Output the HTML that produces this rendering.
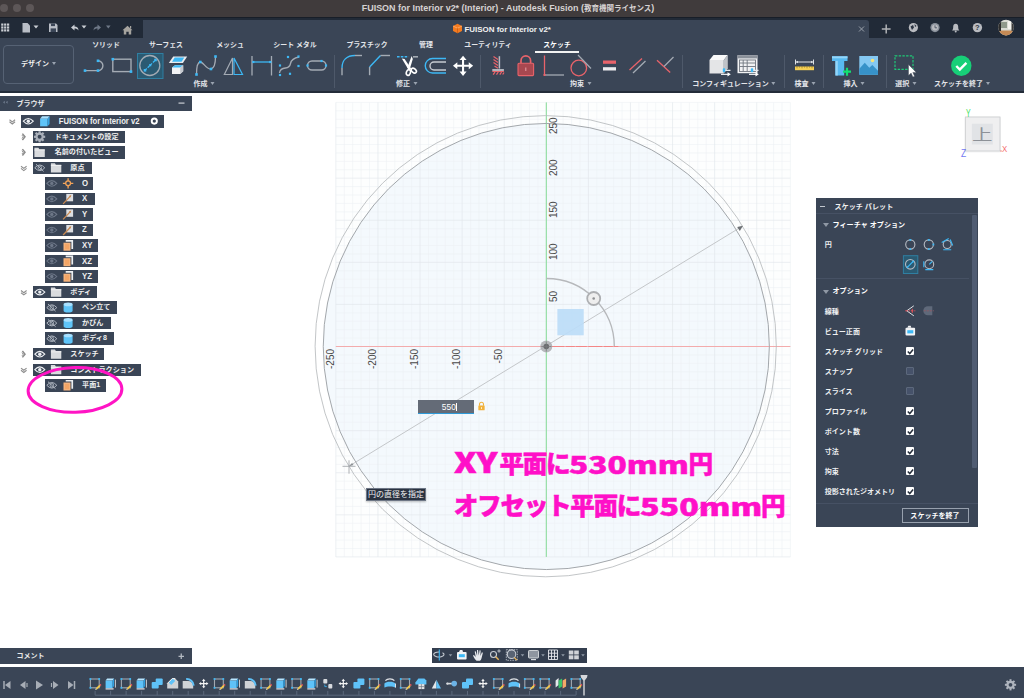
<!DOCTYPE html>
<html lang="ja"><head><meta charset="utf-8"><title>FUISON for Interior v2</title>
<style>
*{box-sizing:border-box;margin:0;padding:0}
html,body{width:1024px;height:698px;overflow:hidden;background:#fff}
body{font-family:"Liberation Sans","Noto Sans CJK JP",sans-serif;position:relative;color:#fff}
.a{position:absolute}
svg{position:absolute;overflow:visible}
#titlebar{left:0;top:0;width:1024px;height:17px;background:#403b3c}
#title{left:0;top:0;width:1016px;height:17px;text-align:center;font-size:8.95px;line-height:16.6px;color:#d6d2d2;font-weight:bold;white-space:nowrap}
.tl{position:absolute;top:4px;width:8px;height:8px;border-radius:50%;background:#5d5758}
#qat{left:0;top:17px;width:1024px;height:21px;background:#212a37;border-top:1.5px solid #181e28}
#tab{left:143px;top:20px;width:725.5px;height:18px;background:#3a4556}
#tabt{left:464.5px;top:20px;height:19px;font-size:7.95px;line-height:20px;font-weight:bold;color:#f2f2f2;white-space:nowrap}
#toolbar{left:0;top:38px;width:1024px;height:53px;background:#3a4556}
#tbline{left:0;top:91px;width:1024px;height:2px;background:#232c39}
.tabl{position:absolute;top:38.5px;height:12px;line-height:12px;font-size:6.9px;font-weight:bold;color:#e4e6ea;white-space:nowrap;transform:translateX(-50%)}
.grpl{position:absolute;top:78px;height:12px;line-height:12px;font-size:7px;font-weight:bold;color:#e4e6ea;white-space:nowrap;transform:translateX(-50%)}
.car{display:inline-block;width:0;height:0;border-left:2.5px solid transparent;border-right:2.5px solid transparent;border-top:3px solid #9aa3b0;margin-left:3px;vertical-align:1px}
.sep{position:absolute;top:55px;width:1px;height:32.5px;background:#4e596a}
#design{left:3px;top:45px;width:71px;height:39px;border:1px solid #566274;border-radius:4px;font-size:7px;font-weight:bold;line-height:35.6px;text-align:center;color:#f0f0f0}
.row{position:absolute;height:12.5px;background:#3a4556;font-size:7.1px;font-weight:bold;line-height:12.8px;color:#f0f0f0;white-space:nowrap}
.row span{position:absolute;top:0}
#bhead{left:0;top:95.7px;width:192px;height:15.3px;background:#3a4556;font-size:7px;font-weight:bold;line-height:15px;color:#e8e8e8}
#cbar{left:0;top:648.3px;width:192px;height:15.8px;background:#3a4556;font-size:7px;font-weight:bold;line-height:16px;color:#e8e8e8}
#tline{left:0;top:667px;width:1024px;height:31px;background:#3a4556}
#nav{left:432px;top:647.5px;width:154.6px;height:15.3px;background:#343e4f}
#pal{left:816px;top:198px;width:161.5px;height:328.5px;background:#3a4556}
.pl{position:absolute;left:8.7px;font-size:7.05px;font-weight:bold;color:#eef0f2;white-space:nowrap;height:12px;line-height:12px}
.ph{position:absolute;left:16.5px;font-size:7.1px;font-weight:bold;color:#fff;white-space:nowrap;height:12px;line-height:12px}
.tri{position:absolute;left:6.5px;width:0;height:0;border-left:3px solid transparent;border-right:3px solid transparent;border-top:4px solid #8f98a5}
.cb{position:absolute;left:90px;width:8.4px;height:8.4px;background:#fff;border-radius:1px}
.cbe{position:absolute;left:90px;width:8.4px;height:8.4px;background:#46526a;border:1px solid #5c687c;border-radius:1px}
#pink{left:455px;top:0;font-size:24.6px;line-height:34px;letter-spacing:-1.3px;-webkit-text-stroke:.5px #ff10c8;color:#ff10c8;font-family:"Noto Sans CJK JP","Liberation Sans",sans-serif;font-weight:900;white-space:nowrap}
.axl{position:absolute;font-family:"Liberation Sans",sans-serif;font-size:10px;color:#4a4a4a;white-space:nowrap;transform-origin:0 0;transform:rotate(-90deg);line-height:10px;height:10px}
#tip{left:365.7px;top:488.3px;width:60.5px;height:12.6px;background:#2a3240;border:1px solid #6d7685;color:#f4f4f4;font-size:8px;line-height:12px;text-align:center;white-space:nowrap;box-shadow:0 1px 2px rgba(0,0,0,.25)}
#inp{left:418.4px;top:399.7px;width:55.8px;height:14.5px;background:#646b77;border-bottom:1.5px solid #2e9ad8;color:#fff;font-size:8.4px;line-height:14px;text-align:right;padding-right:18.4px}
.lx{display:inline-block;vertical-align:baseline}.lx{letter-spacing:0}.lx b{display:inline-block;font-weight:900;transform-origin:0 76%}
</style></head><body>
<div id="titlebar" class="a"><span class="tl" style="left:0px"></span><span class="tl" style="left:13px"></span><span class="tl" style="left:26px"></span></div>
<div id="title" class="a">FUISON for Interior v2* (Interior) - Autodesk Fusion (<span style="font-size:7.500px">教育機関ライセンス</span>)</div>
<div id="qat" class="a"></div><div id="tab" class="a" style="border-radius:0 3px 0 0"></div>
<div id="tabt" class="a">FUISON for Interior v2*</div>
<div id="toolbar" class="a"></div><div id="tbline" class="a"></div>
<div id="design" class="a">デザイン<i class="car"></i></div>
<div class="tabl" style="left:106px;">ソリッド</div>
<div class="tabl" style="left:166px;">サーフェス</div>
<div class="tabl" style="left:230px;">メッシュ</div>
<div class="tabl" style="left:295px;">シート メタル</div>
<div class="tabl" style="left:367px;">プラスチック</div>
<div class="tabl" style="left:426px;">管理</div>
<div class="tabl" style="left:488px;">ユーティリティ</div>
<div class="tabl" style="left:557px;color:#fff">スケッチ</div>
<div class="a" style="left:535px;top:51px;width:44px;height:2px;background:#f2f2f2"></div>
<div class="grpl" style="left:204px">作成<i class="car"></i></div>
<div class="grpl" style="left:406.5px">修正<i class="car"></i></div>
<div class="grpl" style="left:580.6px">拘束<i class="car"></i></div>
<div class="grpl" style="left:734px">コンフィギュレーション<i class="car"></i></div>
<div class="grpl" style="left:805px">検査<i class="car"></i></div>
<div class="grpl" style="left:854px">挿入<i class="car"></i></div>
<div class="grpl" style="left:905.7px">選択<i class="car"></i></div>
<div class="grpl" style="left:962px">スケッチを終了<i class="car"></i></div>
<div class="sep" style="left:333.5px"></div>
<div class="sep" style="left:479.5px"></div>
<div class="sep" style="left:681.5px"></div>
<div class="sep" style="left:784px"></div>
<div class="sep" style="left:823px"></div>
<div class="sep" style="left:885.5px"></div>
<svg width="1024" height="93" style="left:0;top:0" viewBox="0 0 1024 93"><rect x="1.2" y="23.5" width="2.2" height="2.2" fill="#c9cdd3"/><rect x="1.2" y="26.4" width="2.2" height="2.2" fill="#c9cdd3"/><rect x="1.2" y="29.3" width="2.2" height="2.2" fill="#c9cdd3"/><rect x="4.1" y="23.5" width="2.2" height="2.2" fill="#c9cdd3"/><rect x="4.1" y="26.4" width="2.2" height="2.2" fill="#c9cdd3"/><rect x="4.1" y="29.3" width="2.2" height="2.2" fill="#c9cdd3"/><rect x="7.0" y="23.5" width="2.2" height="2.2" fill="#c9cdd3"/><rect x="7.0" y="26.4" width="2.2" height="2.2" fill="#c9cdd3"/><rect x="7.0" y="29.3" width="2.2" height="2.2" fill="#c9cdd3"/><path d="M22.5 23 h5 l2.5 2.5 v7 h-7.5z" fill="#b9bec6"/><path d="M33.5 25.5h5l-2.5 3z" fill="#c9cdd3"/><path d="M49 23.5h7l1.5 1.5v7h-8.5z" fill="#b9bec6"/><rect x="51" y="23.5" width="4" height="2.6" fill="#3a4556"/><rect x="50.6" y="28.4" width="5.4" height="3.6" fill="#3a4556"/><path d="M71 27.5l3.5-3v2c2.5 0 4 1.2 4 4-1-1.6-2.2-2-4-2v2z" fill="#c9cdd3"/><path d="M81.500 25.5h5l-2.5 3z" fill="#c9cdd3"/><path d="M101 27.5l-3.500-3v2c-2.500 0-4 1.200-4 4 1-1.600 2.200-2 4-2v2z" fill="#6e7887"/><path d="M106 25.5h4.600l-2.300 3z" fill="#6e7887"/><path d="M122.500 30.200l5-4.500 5 4.500h-1.300v4.300h-2.500v-2.800h-2.400v2.800h-2.500v-4.300z" fill="#a6a49f"/><rect x="130" y="26" width="1.200" height="2.500" fill="#a6a49f"/><path d="M453 26l4.500-2.300 4.500 2.300v5l-4.500 2.300-4.500-2.300z" fill="#f47b20"/><path d="M453 26l4.500 2.200 4.500-2.200" stroke="#ffb070" stroke-width=".8" fill="none"/><path d="M457.500 28.200v5" stroke="#c95d10" stroke-width=".8"/><path d="M859 26.500l5 5m0-5l-5 5" stroke="#9aa1ab" stroke-width="1"/><path d="M881.800 29h8.800m-4.400-4.400v8.800" stroke="#b0b2b5" stroke-width="1.500"/><circle cx="913.400" cy="27.600" r="4.600" fill="#b9bbc0"/><path d="M910.500 26.500l2.500-1.500 1 2.500-2 2.500zM914.500 24l2 2-1.500 1z" fill="#2a3341"/><circle cx="935" cy="27.600" r="4.600" fill="#8a919b"/><circle cx="935" cy="27.600" r="3" fill="#b9bbc0"/><path d="M935 25.300v2.500h2" stroke="#4a5362" stroke-width=".9" fill="none"/><path d="M952 30.500c1-.8 1.200-2 1.200-3.800 0-1.700 1-2.900 2.500-2.900s2.500 1.200 2.500 2.900c0 1.800.2 3 1.200 3.800z" fill="#b9bbc0"/><circle cx="955.700" cy="31.600" r="1" fill="#b9bbc0"/><circle cx="977.400" cy="27.600" r="4.700" fill="#b9bbc0"/><text x="977.400" y="30.400" font-size="7.500" font-weight="bold" text-anchor="middle" fill="#2a3341" font-family="Liberation Sans,sans-serif">?</text><clipPath id="av"><circle cx="1006" cy="27.600" r="7.800"/></clipPath><g clip-path="url(#av)"><rect x="998" y="19" width="16" height="17" fill="#d9dcd4"/><rect x="998" y="30.500" width="16" height="6" fill="#c58a55"/><rect x="1001" y="22" width="6" height="6" fill="#8f9a8c"/><rect x="1008" y="21" width="5" height="8" fill="#f3f3ee"/><rect x="998" y="19" width="3" height="12" fill="#2d2d2d"/><rect x="1011.500" y="19" width="3" height="12" fill="#3a3a3a"/></g><path d="M85 70.600H98A4.900 4.900 0 0 0 98 60.800" stroke="#a4abb4" stroke-width="1.400" fill="none"/><rect x="83.7" y="69.3" width="2.6" height="2.6" fill="#3db8f5"/><rect x="96.7" y="69.3" width="2.6" height="2.6" fill="#3db8f5"/><rect x="96.7" y="59.5" width="2.6" height="2.6" fill="#3db8f5"/><rect x="112.800" y="59.200" width="18.200" height="12.400" stroke="#a4abb4" stroke-width="1.400" fill="none"/><rect x="111.5" y="57.9" width="2.6" height="2.6" fill="#3db8f5"/><rect x="129.7" y="70.3" width="2.6" height="2.6" fill="#3db8f5"/><rect x="137.500" y="53.500" width="25.500" height="25" fill="#2b5a72" stroke="#2f7fa2" stroke-width="1"/><circle cx="149.800" cy="65.500" r="10" stroke="#a4abb4" stroke-width="1.300" fill="none"/><path d="M145 70.300L155.500 60" stroke="#3db8f5" stroke-width="1.200" stroke-dasharray="2.500 1.200"/><rect x="143.7" y="69.0" width="2.6" height="2.6" fill="#3db8f5"/><rect x="154.2" y="58.7" width="2.6" height="2.6" fill="#3db8f5"/><rect x="149.1" y="64.1" width="2.2" height="2.2" fill="#3db8f5"/><path d="M168.800 63l4.400-6.600h14l-4.300 6.600z" fill="#e9ebee"/><path d="M172 61.800l2.700-4.200h9.600l-2.700 4.200z" fill="#3db8f5"/><path d="M172 67.500l3-2.200h8.200v6l-3 2.700h-8.200z" fill="#f2f3f5"/><path d="M172 67.500l3-2.200h8.200l-3 2.200z" fill="#3db8f5"/><path d="M180.200 67.500l3-2.200v6l-3 2.700z" fill="#c4c8ce"/><path d="M196.500 74.500C196.500 66 198 62 200.500 62S207 70 211 69S215.500 62 215.500 56.500" stroke="#a4abb4" stroke-width="1.300" fill="none"/><rect x="195.2" y="73.2" width="2.6" height="2.6" fill="#3db8f5"/><rect x="199.0" y="60.7" width="2.6" height="2.6" fill="#3db8f5"/><rect x="209.7" y="67.7" width="2.6" height="2.6" fill="#3db8f5"/><rect x="214.2" y="55.2" width="2.6" height="2.6" fill="#3db8f5"/><path d="M224.300 74.500L232.500 58V74.500z" stroke="#a4abb4" stroke-width="1.200" fill="none"/><path d="M234 58l8.500 16.500H234z" stroke="#3db8f5" stroke-width="1.200" fill="none"/><path d="M252 56v19.500M271.500 56v19.500" stroke="#a4abb4" stroke-width="1.300"/><path d="M253 62h18" stroke="#3db8f5" stroke-width="1.300"/><rect x="252.2" y="60.9" width="2.2" height="2.2" fill="#3db8f5"/><rect x="269.2" y="60.9" width="2.2" height="2.2" fill="#3db8f5"/><path d="M279.500 73c.5-3.500 3-4.800 6-5s4.500-2 5-4.500 3-5.500 8.500-6.500" stroke="#a4abb4" stroke-width="1.300" fill="none"/><rect x="278.9" y="64.4" width="2.2" height="2.2" fill="#3db8f5"/><rect x="278.9" y="73.9" width="2.2" height="2.2" fill="#3db8f5"/><rect x="286.9" y="55.9" width="2.2" height="2.2" fill="#3db8f5"/><rect x="288.9" y="72.7" width="2.2" height="2.2" fill="#3db8f5"/><rect x="297.4" y="55.4" width="2.2" height="2.2" fill="#3db8f5"/><rect x="297.4" y="64.9" width="2.2" height="2.2" fill="#3db8f5"/><rect x="307.500" y="61" width="18.500" height="9" rx="4.500" stroke="#a4abb4" stroke-width="1.400" fill="none"/><rect x="306.4" y="64.4" width="2.2" height="2.2" fill="#3db8f5"/><rect x="324.9" y="64.4" width="2.2" height="2.2" fill="#3db8f5"/><rect x="320.4" y="59.9" width="2.2" height="2.2" fill="#3db8f5"/><path d="M342 75.200V68" stroke="#a4abb4" stroke-width="1.400"/><path d="M342 68C342 60 347 55.500 355 55.500" stroke="#3db8f5" stroke-width="1.400" fill="none"/><path d="M355 55.500h7" stroke="#a4abb4" stroke-width="1.400"/><path d="M369.600 75.200V67" stroke="#a4abb4" stroke-width="1.400"/><path d="M369.600 67L380.500 55.500" stroke="#3db8f5" stroke-width="1.400"/><path d="M380.500 55.500H390" stroke="#a4abb4" stroke-width="1.400"/><path d="M397 56.800h11.500" stroke="#3db8f5" stroke-width="1.600" stroke-dasharray="2.600 1.200"/><path d="M413 56.800h5" stroke="#a4abb4" stroke-width="1.600"/><path d="M401.800 58.600l2.800.3 6.600 9.800-2.200 1.800z" fill="#fff"/><path d="M411.600 56l1.200 3-3 10-2.600-1z" fill="#fff"/><ellipse cx="408.400" cy="72.500" rx="2" ry="2.900" transform="rotate(20 408.400 72.500)" stroke="#fff" stroke-width="1.600" fill="none"/><ellipse cx="413.800" cy="70.600" rx="2" ry="2.900" transform="rotate(-50 413.800 70.600)" stroke="#fff" stroke-width="1.600" fill="none"/><path d="M446 58.500H432.500a7.250 7.250 0 0 0 0 14.500H446" stroke="#3db8f5" stroke-width="1.400" fill="none"/><path d="M446 62H434a4 4 0 0 0 0 8H446" stroke="#c5cad1" stroke-width="1.400" fill="none"/><g transform="translate(463.050 65.800) scale(1.040)"><path d="M0 -9.700l3.400 4.200h-2.400v4.500h4.500v-2.400l4.200 3.400-4.200 3.400v-2.400h-4.500v4.500h2.400l-3.400 4.200-3.400-4.200h2.400v-4.500h-4.500v2.400l-4.200-3.400 4.200-3.400v2.400h4.500v-4.500h-2.400z" fill="#fff"/></g><path d="M499.400 56.200V68.500" stroke="#b8bdc5" stroke-width="1.500"/><path d="M493.500 56.500l4.500 3M493.500 59.500l4.500 3M493.500 62.500l4.500 3M494.500 66l3.500 2.300" stroke="#e8636a" stroke-width="1.300"/><path d="M492.300 70h11.600" stroke="#d8dbe0" stroke-width="1.500"/><path d="M492.300 71.500h11.600" stroke="#e8636a" stroke-width="1"/><path d="M495 72l-1.800 2.600M498.300 72l-1.800 2.600M501.600 72l-1.800 2.600M504 72.500l-1.300 2" stroke="#e8636a" stroke-width="1.300"/><path d="M521 63.500v-2.800a4.800 4.800 0 0 1 9.600 0v2.800" stroke="#e8636a" stroke-width="1.700" fill="none"/><rect x="518" y="63.300" width="15.600" height="12.300" rx="1" fill="#a84850" stroke="#e8636a" stroke-width="1.100"/><path d="M525.800 67.500v3.500" stroke="#e9a0a4" stroke-width="1"/><path d="M544.500 55.500V75" stroke="#e8636a" stroke-width="1.300"/><path d="M545 75h19" stroke="#a4abb4" stroke-width="1.300"/><rect x="543.500" y="74" width="2" height="2" fill="#e8636a"/><circle cx="578.800" cy="68" r="7.800" stroke="#e8636a" stroke-width="1.300" fill="none"/><path d="M578 55l13 13.500" stroke="#a4abb4" stroke-width="1.200"/><rect x="603" y="60.500" width="13" height="3.300" fill="#e8636a"/><rect x="603" y="67.200" width="13" height="3.300" fill="#ebecee"/><path d="M629.500 70L642 58.500" stroke="#e8636a" stroke-width="1.300"/><path d="M633 73L645.500 61" stroke="#a4abb4" stroke-width="1.300"/><path d="M657 60.300L670.200 72.600" stroke="#e8636a" stroke-width="1.300"/><path d="M664 66.500L673.500 57" stroke="#a4abb4" stroke-width="1.300"/><path d="M709.500 60l4-5h14.300l-4 5z" fill="#fafafa"/><path d="M709.500 60h14.300v13.500h-14.300z" fill="#e4e5e7"/><path d="M723.800 60l4-5v13.500l-4 5z" fill="#bfc2c7"/><path d="M721 70.300h9.500M721 74.300h7" stroke="#e8eaee" stroke-width="1.300"/><rect x="722.800" y="68.300" width="2.400" height="4" rx=".8" fill="#3db8f5"/><path d="M727.500 72.200l3.300 2.100-3.300 2.100z" fill="#fff"/><rect x="737.500" y="55.200" width="20" height="18" fill="#f1f2f3"/><rect x="737.500" y="55.200" width="20" height="3.200" fill="#8a9099"/><path d="M739.500 63h16M739.500 66.500h16M743.200 60v11.500M747.200 60v11.500" stroke="#70767f" stroke-width=".9"/><rect x="739.500" y="60" width="16" height="11.500" fill="none" stroke="#70767f" stroke-width=".9"/><path d="M749 70.300h9.500M749 74.300h7" stroke="#e8eaee" stroke-width="1.300"/><rect x="750.800" y="68.300" width="2.400" height="4" rx=".8" fill="#3db8f5"/><path d="M755.500 72.200l3.300 2.100-3.300 2.100z" fill="#fff"/><path d="M795.500 59.500v5M813.500 59.500v5M796 62h17" stroke="#dfe2e6" stroke-width="1"/><path d="M796 62l2-1.200v2.400zM813 62l-2-1.200v2.400z" fill="#dfe2e6"/><rect x="795" y="66.500" width="19" height="3.700" fill="#f5cf55"/><path d="M797 66.300v2M799.500 66.300v1.300M802 66.300v2M804.500 66.300v1.300M807 66.300v2M809.500 66.300v1.300M812 66.300v2" stroke="#8a6d14" stroke-width=".6"/><path d="M832 56.300h15.500v4.600h-3.300v14.600h-8.800v-14.600h-3.400z" fill="#58b9f0"/><path d="M832 56.300h15.500v2h-15.500z" fill="#93d5f9"/><path d="M835.400 60.900h2.400v14.600h-2.400z" fill="#93d5f9"/><path d="M843 71.700h8M847 67.700v8" stroke="#12e070" stroke-width="2.200"/><rect x="859.300" y="56" width="18.700" height="18.700" fill="#84c8f2"/><path d="M859.300 74.700v-6l5.500-6 4.500 5 3-2.700 5.700 5.700v4z" fill="#3792c9"/><circle cx="872.500" cy="60.500" r="1.800" fill="#f6e27a"/><rect x="895" y="55.800" width="18" height="13.500" fill="none" stroke="#1fc977" stroke-width="1.200" stroke-dasharray="2.400 1.300"/><path d="M908.500 64.500v11l2.600-2.400 1.800 4 1.700-.8-1.800-3.900h3.500z" fill="#fff" stroke="#39424f" stroke-width=".4"/><circle cx="961.300" cy="65.800" r="10.200" fill="#17cf78"/><path d="M956.300 66l3.500 3.600 6.600-6.800" stroke="#fff" stroke-width="2.400" fill="none"/></svg>
<svg width="1024" height="500" style="left:0;top:94px" viewBox="0 94 1024 500"><rect x="335.87" y="102.41" width="454.52" height="454.52" fill="#fdfefe"/><circle cx="546.3" cy="346.5" r="223.05" fill="#f4f9fd"/><path d="M344.29 102.41V556.92M352.71 102.41V556.92M361.13 102.41V556.92M369.54 102.41V556.92M386.38 102.41V556.92M394.79 102.41V556.92M403.21 102.41V556.92M411.63 102.41V556.92M428.46 102.41V556.92M436.88 102.41V556.92M445.30 102.41V556.92M453.71 102.41V556.92M470.55 102.41V556.92M478.96 102.41V556.92M487.38 102.41V556.92M495.80 102.41V556.92M512.63 102.41V556.92M521.05 102.41V556.92M529.47 102.41V556.92M537.88 102.41V556.92M554.72 102.41V556.92M563.13 102.41V556.92M571.55 102.41V556.92M579.97 102.41V556.92M596.80 102.41V556.92M605.22 102.41V556.92M613.64 102.41V556.92M622.05 102.41V556.92M638.89 102.41V556.92M647.30 102.41V556.92M655.72 102.41V556.92M664.14 102.41V556.92M680.97 102.41V556.92M689.39 102.41V556.92M697.81 102.41V556.92M706.22 102.41V556.92M723.06 102.41V556.92M731.47 102.41V556.92M739.89 102.41V556.92M748.31 102.41V556.92M765.14 102.41V556.92M773.56 102.41V556.92M781.98 102.41V556.92M790.39 102.41V556.92M335.87 548.51H790.39M335.87 540.09H790.39M335.87 531.67H790.39M335.87 523.26H790.39M335.87 506.42H790.39M335.87 498.01H790.39M335.87 489.59H790.39M335.87 481.17H790.39M335.87 464.34H790.39M335.87 455.92H790.39M335.87 447.50H790.39M335.87 439.09H790.39M335.87 422.25H790.39M335.87 413.84H790.39M335.87 405.42H790.39M335.87 397.00H790.39M335.87 380.17H790.39M335.87 371.75H790.39M335.87 363.33H790.39M335.87 354.92H790.39M335.87 338.08H790.39M335.87 329.67H790.39M335.87 321.25H790.39M335.87 312.83H790.39M335.87 296.00H790.39M335.87 287.58H790.39M335.87 279.16H790.39M335.87 270.75H790.39M335.87 253.91H790.39M335.87 245.50H790.39M335.87 237.08H790.39M335.87 228.66H790.39M335.87 211.83H790.39M335.87 203.41H790.39M335.87 194.99H790.39M335.87 186.58H790.39M335.87 169.74H790.39M335.87 161.33H790.39M335.87 152.91H790.39M335.87 144.49H790.39M335.87 127.66H790.39M335.87 119.24H790.39M335.87 110.82H790.39M335.87 102.41H790.39" stroke="#edf0f4" stroke-width=".55" fill="none"/><path d="M335.87 102.41V556.92M377.96 102.41V556.92M420.04 102.41V556.92M462.13 102.41V556.92M504.21 102.41V556.92M546.30 102.41V556.92M588.38 102.41V556.92M630.47 102.41V556.92M672.55 102.41V556.92M714.64 102.41V556.92M756.72 102.41V556.92M335.87 556.92H790.39M335.87 514.84H790.39M335.87 472.75H790.39M335.87 430.67H790.39M335.87 388.58H790.39M335.87 346.50H790.39M335.87 304.42H790.39M335.87 262.33H790.39M335.87 220.25H790.39M335.87 178.16H790.39M335.87 136.07H790.39" stroke="#e2e6eb" stroke-width=".65" fill="none"/><path d="M335.87 346.5H790.39" stroke="#f4a4a4" stroke-width=".9"/><path d="M546.3 102.41V556.92" stroke="#86dc98" stroke-width="1"/><circle cx="546.3" cy="346.5" r="223.05" fill="none" stroke="#9ea2a6" stroke-width=".95"/><circle cx="545.700" cy="346.200" r="230.600" fill="none" stroke="#b7babd" stroke-width=".85"/><path d="M349 466.200L741 227" stroke="#b8babd" stroke-width=".8"/><path d="M743 225.700l-5.800 1.300 2.600 4z" fill="#6c7074"/><path d="M342.500 466.300h13M349 460.300v13.400" stroke="#a4a7ab" stroke-width=".9"/><path d="M349 466.200l4.500-1.200-1.500-2z" fill="#8c9094"/><path d="M546.3 278.500A68 68 0 0 1 614.3 346.5" fill="none" stroke="#b6b8bb" stroke-width="1.300"/><path d="M550.3 346.5H618.3" stroke="#f48686" stroke-width="1.200" stroke-dasharray="14 1.500 9 1 11 1.500"/><circle cx="593.700" cy="298.500" r="6.500" fill="#eeeeee" stroke="#adafb2" stroke-width="1.800"/><circle cx="593.700" cy="298.500" r="1.300" fill="#8d8f92"/><rect x="557.400" y="309" width="26.300" height="26.300" fill="#bcdcf7" opacity=".92"/><circle cx="546.3" cy="346.5" r="6" fill="#a6a8ab" opacity=".8"/><circle cx="546.3" cy="346.5" r="2.800" fill="#6a6c6f"/><path d="M541.3 346.5h10M546.3 341.5v10" stroke="#77797c" stroke-width=".7"/></svg>
<div class="axl" style="left:548.9px;top:301.8px">50</div>
<div class="axl" style="left:494.2px;top:373.0px;width:24px;text-align:right">-50</div>
<div class="axl" style="left:548.9px;top:259.7px">100</div>
<div class="axl" style="left:452.1px;top:373.0px;width:24px;text-align:right">-100</div>
<div class="axl" style="left:548.9px;top:217.6px">150</div>
<div class="axl" style="left:410.0px;top:373.0px;width:24px;text-align:right">-150</div>
<div class="axl" style="left:548.9px;top:175.6px">200</div>
<div class="axl" style="left:368.0px;top:373.0px;width:24px;text-align:right">-200</div>
<div class="axl" style="left:548.9px;top:133.5px">250</div>
<div class="axl" style="left:325.9px;top:373.0px;width:24px;text-align:right">-250</div>
<div id="inp" class="a">550<span class="a" style="right:17.300px;top:3.300px;width:.7px;height:8.500px;background:#fff"></span></div>
<svg width="9" height="10.800" style="left:476.600px;top:401.200px" viewBox="0 0 10 12"><path d="M2.800 5.200V3.600a2.200 2.200 0 0 1 4.400 0V5.200" stroke="#f1b13a" stroke-width="1.200" fill="none"/><rect x="1.500" y="5" width="7" height="5.400" rx=".6" fill="#f1b13a"/><rect x="4.500" y="6.800" width="1" height="2" fill="#fff6d8"/></svg>
<div id="tip" class="a">円の直径を指定</div>
<div id="pink" class="a"><div class="a" id="pk1" style="left:0;top:444.900px"><span class="lx" style="width:44.4px"><b style="transform:translateY(0px) scale(1.4,1.11);margin-left:-1px">XY</b></span>平面に<span class="lx" style="width:119.2px"><b style="transform:translateY(1.4px) scale(1.285,0.96);margin-left:0px">530mm</b></span>円</div><div class="a" id="pk2" style="left:-1.200px;top:486.500px">オフセット平面に<span class="lx" style="width:120.8px"><b style="transform:translateY(1.4px) scale(1.31,0.96);margin-left:0px">550mm</b></span>円</div></div>
<svg width="70" height="60" style="left:954px;top:100px" viewBox="954 100 70 60"><rect x="964.400" y="116.500" width="36.600" height="36" rx="1.500" fill="#f4f4f5"/><rect x="965.400" y="117" width="34.600" height="34" fill="#efeff0" stroke="#cfd0d2" stroke-width=".9"/><rect x="971.900" y="123.700" width="20.900" height="20.800" fill="#e1e3e6"/><path d="M1000 151h2" stroke="#f27a7a" stroke-width=".8"/><text x="968.200" y="116.800" font-size="11.500" fill="#45e060" text-anchor="middle" font-family="Liberation Sans,sans-serif" transform="translate(968.200 0) scale(.6 1) translate(-968.200 0)">Y</text><text x="1004.600" y="151.700" font-size="9.800" fill="#f46e6e" text-anchor="middle" font-family="Liberation Sans,sans-serif" transform="translate(1004.600 0) scale(.8 1) translate(-1004.600 0)">X</text><text x="963.500" y="156.600" font-size="10" fill="#6f78f2" text-anchor="middle" font-family="Liberation Sans,sans-serif" transform="translate(963.500 0) scale(.85 1) translate(-963.500 0)">Z</text><text x="982.300" y="141.300" font-size="20.500" font-weight="400" fill="#8d9197" text-anchor="middle" font-family="Noto Sans CJK JP,sans-serif" transform="translate(0 140.300) scale(1 .72) translate(0 -141.300)">上</text></svg>
<div id="bhead" class="a"><span class="a" style="left:16.500px;top:0">ブラウザ</span></div>
<div class="row" style="left:21.3px;top:115.0px;width:142.3px"><span style="left:37.5px;font-size:7.7px;transform:scaleY(1.16);top:1.4px">FUISON for Interior v2</span></div>
<div class="row" style="left:32.8px;top:130.5px;width:91.9px"><span style="left:21.9px">ドキュメントの設定</span></div>
<div class="row" style="left:32.8px;top:146.1px;width:91.9px"><span style="left:21.9px">名前の付いたビュー</span></div>
<div class="row" style="left:32.8px;top:161.6px;width:58.8px"><span style="left:37.5px">原点</span></div>
<div class="row" style="left:44.8px;top:177.1px;width:48.2px"><span style="left:37.3px;font-size:7.8px;top:.8px;transform:scaleY(1.12)">O</span></div>
<div class="row" style="left:44.8px;top:192.6px;width:50.7px"><span style="left:37.3px;font-size:7.8px;top:.8px;transform:scaleY(1.12)">X</span></div>
<div class="row" style="left:44.8px;top:208.2px;width:48.2px"><span style="left:37.3px;font-size:7.8px;top:.8px;transform:scaleY(1.12)">Y</span></div>
<div class="row" style="left:44.8px;top:223.7px;width:48.2px"><span style="left:37.3px;font-size:7.8px;top:.8px;transform:scaleY(1.12)">Z</span></div>
<div class="row" style="left:44.8px;top:239.2px;width:53.2px"><span style="left:37.3px;font-size:7.8px;top:.8px;transform:scaleY(1.12)">XY</span></div>
<div class="row" style="left:44.8px;top:254.8px;width:53.2px"><span style="left:37.3px;font-size:7.8px;top:.8px;transform:scaleY(1.12)">XZ</span></div>
<div class="row" style="left:44.8px;top:270.3px;width:53.2px"><span style="left:37.3px;font-size:7.8px;top:.8px;transform:scaleY(1.12)">YZ</span></div>
<div class="row" style="left:32.8px;top:285.8px;width:64.0px"><span style="left:37.5px">ボディ</span></div>
<div class="row" style="left:44.8px;top:301.4px;width:71.8px"><span style="left:37.3px">ペン立て</span></div>
<div class="row" style="left:44.8px;top:316.9px;width:66.2px"><span style="left:37.3px">かびん</span></div>
<div class="row" style="left:44.8px;top:332.4px;width:68.8px"><span style="left:37.3px">ボディ8</span></div>
<div class="row" style="left:32.8px;top:347.9px;width:71.7px"><span style="left:37.5px">スケッチ</span></div>
<div class="row" style="left:32.8px;top:363.5px;width:108.2px"><span style="left:37.5px">コンストラクション</span></div>
<div class="row" style="left:44.8px;top:379.0px;width:61.2px"><span style="left:37.3px">平面1</span></div>
<svg width="260" height="330" style="left:0;top:94px" viewBox="0 94 260 330"><path d="M3 102.300l1.800-1.500v3zM5.800 102.300l1.800-1.500v3z" fill="#6f7b8e"/><rect x="178.500" y="102.500" width="6" height="1.200" fill="#c9cdd3"/><path d="M23.3 121.2Q28.3 115.7 33.3 121.2Q28.3 126.8 23.3 121.2z" fill="none" stroke="#eef0f3" stroke-width="1.100"/><circle cx="28.3" cy="121.2" r="1.700" fill="#eef0f3"/><path d="M40.1 118.7l2-2.400h7.500l-2 2.400z" fill="#a8e0ff"/><path d="M40.1 118.7h7.500v7.600h-7.500z" fill="#5fc4f8"/><path d="M47.6 118.7l2-2.400v7.600l-2 2.400z" fill="#36a4e4"/><path d="M9.5 119.7l2.800 2.200 2.800-2.200M9.5 121.8l2.800 2.200 2.800-2.200" fill="none" stroke="#8e8e8e" stroke-width="1.100"/><circle cx="39.599999999999994" cy="136.78" r="3.100" fill="none" stroke="#aab0ba" stroke-width="2.200"/><rect x="38.5" y="131.2" width="2.200" height="2.600" fill="#aab0ba" transform="rotate(0 39.599999999999994 136.78)"/><rect x="38.5" y="131.2" width="2.200" height="2.600" fill="#aab0ba" transform="rotate(45 39.599999999999994 136.78)"/><rect x="38.5" y="131.2" width="2.200" height="2.600" fill="#aab0ba" transform="rotate(90 39.599999999999994 136.78)"/><rect x="38.5" y="131.2" width="2.200" height="2.600" fill="#aab0ba" transform="rotate(135 39.599999999999994 136.78)"/><rect x="38.5" y="131.2" width="2.200" height="2.600" fill="#aab0ba" transform="rotate(180 39.599999999999994 136.78)"/><rect x="38.5" y="131.2" width="2.200" height="2.600" fill="#aab0ba" transform="rotate(225 39.599999999999994 136.78)"/><rect x="38.5" y="131.2" width="2.200" height="2.600" fill="#aab0ba" transform="rotate(270 39.599999999999994 136.78)"/><rect x="38.5" y="131.2" width="2.200" height="2.600" fill="#aab0ba" transform="rotate(315 39.599999999999994 136.78)"/><path d="M22.4 133.6l2.600 3.200-2.600 3.200" fill="none" stroke="#8c8c8c" stroke-width="1.500"/><path d="M22.0 135.2l1.300 1.600-1.300 1.600" fill="none" stroke="#8c8c8c" stroke-width="1"/><path d="M34.4 147.7h4l1 1.500h5.400v7.700h-10.400z" fill="#d9dbde"/><path d="M34.4 150.0h10.400" stroke="#f4f4f4" stroke-width=".8"/><path d="M22.4 149.1l2.600 3.200-2.600 3.200" fill="none" stroke="#8c8c8c" stroke-width="1.500"/><path d="M22.0 150.7l1.300 1.600-1.300 1.600" fill="none" stroke="#8c8c8c" stroke-width="1"/><path d="M34.8 167.8Q39.8 162.2 44.8 167.8Q39.8 173.4 34.8 167.8z" fill="none" stroke="#aeb5c0" stroke-width="1"/><circle cx="39.8" cy="167.8" r="1.800" fill="none" stroke="#aeb5c0" stroke-width=".9"/><path d="M36.0 164.2L43.6 171.4" stroke="#aeb5c0" stroke-width="1"/><path d="M50.9 163.2h4l1 1.500h5.400v7.700h-10.400z" fill="#d9dbde"/><path d="M50.9 165.5h10.400" stroke="#f4f4f4" stroke-width=".8"/><path d="M21.0 166.2l2.800 2.200 2.800-2.200M21.0 168.4l2.800 2.200 2.800-2.200" fill="none" stroke="#8e8e8e" stroke-width="1.100"/><path d="M46.8 183.4Q51.8 177.8 56.8 183.4Q51.8 189.0 46.8 183.4z" fill="none" stroke="#6d7788" stroke-width="1.100"/><circle cx="51.8" cy="183.4" r="1.700" fill="#6d7788"/><circle cx="68.1" cy="183.37" r="2.400" fill="none" stroke="#f2a35a" stroke-width="1.300"/><path d="M68.1 178.17000000000002v3M68.1 185.57v3M62.89999999999999 183.37h3M70.3 183.37h3" stroke="#f2a35a" stroke-width="1.300"/><path d="M46.8 198.9Q51.8 193.3 56.8 198.9Q51.8 204.5 46.8 198.9z" fill="none" stroke="#6d7788" stroke-width="1.100"/><circle cx="51.8" cy="198.9" r="1.700" fill="#6d7788"/><rect x="66.3" y="193.9" width="6.800" height="7.400" fill="#dcdee2"/><path d="M63.1 203.9L70.6 195.9" stroke="#c98a52" stroke-width="1.300"/><path d="M71.3 195.1l-2.400 .8 1.600 1.600z" fill="#c98a52"/><path d="M46.8 214.4Q51.8 208.8 56.8 214.4Q51.8 220.0 46.8 214.4z" fill="none" stroke="#6d7788" stroke-width="1.100"/><circle cx="51.8" cy="214.4" r="1.700" fill="#6d7788"/><rect x="66.3" y="209.4" width="6.800" height="7.400" fill="#dcdee2"/><path d="M63.1 219.4L70.6 211.4" stroke="#c98a52" stroke-width="1.300"/><path d="M71.3 210.6l-2.400 .8 1.600 1.600z" fill="#c98a52"/><path d="M46.8 230.0Q51.8 224.4 56.8 230.0Q51.8 235.6 46.8 230.0z" fill="none" stroke="#6d7788" stroke-width="1.100"/><circle cx="51.8" cy="230.0" r="1.700" fill="#6d7788"/><rect x="66.3" y="225.0" width="6.800" height="7.400" fill="#dcdee2"/><path d="M63.1 235.0L70.6 227.0" stroke="#c98a52" stroke-width="1.300"/><path d="M71.3 226.2l-2.400 .8 1.600 1.600z" fill="#c98a52"/><path d="M46.8 245.5Q51.8 239.9 56.8 245.5Q51.8 251.1 46.8 245.5z" fill="none" stroke="#6d7788" stroke-width="1.100"/><circle cx="51.8" cy="245.5" r="1.700" fill="#6d7788"/><path d="M65.7 240.1h7.400v8.800h-1.700v-7.100h-5.700z" fill="#eceef0"/><rect x="63.5" y="242.7" width="7" height="8" fill="#f5b27a"/><rect x="65.0" y="244.2" width="4" height="5" fill="#f3a565"/><path d="M46.8 261.0Q51.8 255.4 56.8 261.0Q51.8 266.6 46.8 261.0z" fill="none" stroke="#6d7788" stroke-width="1.100"/><circle cx="51.8" cy="261.0" r="1.700" fill="#6d7788"/><path d="M65.7 255.6h7.400v8.800h-1.700v-7.100h-5.700z" fill="#eceef0"/><rect x="63.5" y="258.2" width="7" height="8" fill="#f5b27a"/><rect x="65.0" y="259.7" width="4" height="5" fill="#f3a565"/><path d="M46.8 276.5Q51.8 270.9 56.8 276.5Q51.8 282.1 46.8 276.5z" fill="none" stroke="#6d7788" stroke-width="1.100"/><circle cx="51.8" cy="276.5" r="1.700" fill="#6d7788"/><path d="M65.7 271.1h7.400v8.800h-1.700v-7.100h-5.700z" fill="#eceef0"/><rect x="63.5" y="273.7" width="7" height="8" fill="#f5b27a"/><rect x="65.0" y="275.2" width="4" height="5" fill="#f3a565"/><path d="M34.8 292.1Q39.8 286.5 44.8 292.1Q39.8 297.7 34.8 292.1z" fill="none" stroke="#eef0f3" stroke-width="1.100"/><circle cx="39.8" cy="292.1" r="1.700" fill="#eef0f3"/><path d="M50.9 287.5h4l1 1.500h5.400v7.700h-10.400z" fill="#d9dbde"/><path d="M50.9 289.8h10.400" stroke="#f4f4f4" stroke-width=".8"/><path d="M21.0 290.5l2.800 2.200 2.800-2.200M21.0 292.7l2.800 2.200 2.800-2.200" fill="none" stroke="#8e8e8e" stroke-width="1.100"/><path d="M46.8 307.6Q51.8 302.0 56.8 307.6Q51.8 313.2 46.8 307.6z" fill="none" stroke="#aeb5c0" stroke-width="1"/><circle cx="51.8" cy="307.6" r="1.800" fill="none" stroke="#aeb5c0" stroke-width=".9"/><path d="M48.0 304.0L55.6 311.2" stroke="#aeb5c0" stroke-width="1"/><path d="M63.6 304.4v6.400a4.500 1.800 0 0 0 9 0v-6.400z" fill="#5fc4f8"/><ellipse cx="68.1" cy="304.4" rx="4.500" ry="1.800" fill="#a8e0ff"/><path d="M46.8 323.1Q51.8 317.5 56.8 323.1Q51.8 328.7 46.8 323.1z" fill="none" stroke="#aeb5c0" stroke-width="1"/><circle cx="51.8" cy="323.1" r="1.800" fill="none" stroke="#aeb5c0" stroke-width=".9"/><path d="M48.0 319.5L55.6 326.7" stroke="#aeb5c0" stroke-width="1"/><path d="M63.6 319.9v6.400a4.500 1.800 0 0 0 9 0v-6.400z" fill="#5fc4f8"/><ellipse cx="68.1" cy="319.9" rx="4.500" ry="1.800" fill="#a8e0ff"/><path d="M46.8 338.7Q51.8 333.1 56.8 338.7Q51.8 344.3 46.8 338.7z" fill="none" stroke="#aeb5c0" stroke-width="1"/><circle cx="51.8" cy="338.7" r="1.800" fill="none" stroke="#aeb5c0" stroke-width=".9"/><path d="M48.0 335.1L55.6 342.3" stroke="#aeb5c0" stroke-width="1"/><path d="M63.6 335.5v6.400a4.500 1.800 0 0 0 9 0v-6.400z" fill="#5fc4f8"/><ellipse cx="68.1" cy="335.5" rx="4.500" ry="1.800" fill="#a8e0ff"/><path d="M34.8 354.2Q39.8 348.6 44.8 354.2Q39.8 359.8 34.8 354.2z" fill="none" stroke="#eef0f3" stroke-width="1.100"/><circle cx="39.8" cy="354.2" r="1.700" fill="#eef0f3"/><path d="M50.9 349.6h4l1 1.500h5.400v7.700h-10.400z" fill="#d9dbde"/><path d="M50.9 351.9h10.400" stroke="#f4f4f4" stroke-width=".8"/><path d="M22.4 351.0l2.600 3.200-2.600 3.200" fill="none" stroke="#8c8c8c" stroke-width="1.500"/><path d="M22.0 352.6l1.300 1.600-1.300 1.600" fill="none" stroke="#8c8c8c" stroke-width="1"/><path d="M34.8 369.7Q39.8 364.1 44.8 369.7Q39.8 375.3 34.8 369.7z" fill="none" stroke="#eef0f3" stroke-width="1.100"/><circle cx="39.8" cy="369.7" r="1.700" fill="#eef0f3"/><path d="M50.9 365.1h4l1 1.500h5.400v7.700h-10.400z" fill="#d9dbde"/><path d="M50.9 367.4h10.400" stroke="#f4f4f4" stroke-width=".8"/><path d="M21.0 368.1l2.800 2.200 2.800-2.200M21.0 370.3l2.800 2.200 2.800-2.200" fill="none" stroke="#8e8e8e" stroke-width="1.100"/><path d="M46.8 385.3Q51.8 379.7 56.8 385.3Q51.8 390.9 46.8 385.3z" fill="none" stroke="#aeb5c0" stroke-width="1"/><circle cx="51.8" cy="385.3" r="1.800" fill="none" stroke="#aeb5c0" stroke-width=".9"/><path d="M48.0 381.7L55.6 388.9" stroke="#aeb5c0" stroke-width="1"/><path d="M65.7 379.9h7.400v8.800h-1.700v-7.100h-5.700z" fill="#eceef0"/><rect x="63.5" y="382.5" width="7" height="8" fill="#f5b27a"/><rect x="65.0" y="384.0" width="4" height="5" fill="#f3a565"/><circle cx="154.300" cy="121.1" r="2.600" fill="none" stroke="#fff" stroke-width="1.900"/><ellipse cx="75" cy="389.900" rx="46.900" ry="22.300" fill="none" stroke="#ff14c4" stroke-width="3" transform="rotate(-1.500 75 389.900)"/></svg>
<div id="pal" class="a"><div class="a" style="left:0;top:14.500px;width:161.500px;height:1px;background:#465164"></div>
<div class="a" style="left:3.500px;top:7.800px;width:5px;height:1.200px;background:#c2c7ce"></div>
<div class="ph" style="left:18.500px;top:2.500px;color:#f0f0f0;font-weight:bold">スケッチ パレット</div>
<div class="a" style="left:156.400px;top:16.500px;width:4.300px;height:253px;background:#505c72;border-radius:1px"></div>
<div class="tri" style="top:25px"></div><div class="ph" style="top:20.600px">フィーチャ オプション</div>
<div class="pl" style="top:41px">円</div>
<div class="a" style="left:0;top:80.300px;width:152.500px;height:1px;background:#465164"></div>
<div class="tri" style="top:91.500px"></div><div class="ph" style="top:87px">オプション</div>
<div class="pl" style="top:107.9px">線種</div>
<div class="pl" style="top:127.9px">ビュー正面</div>
<div class="pl" style="top:147.9px">スケッチ グリッド</div>
<div class="cb" style="top:149.1px"></div>
<div class="pl" style="top:167.9px">スナップ</div>
<div class="cbe" style="top:169.1px"></div>
<div class="pl" style="top:187.9px">スライス</div>
<div class="cbe" style="top:189.1px"></div>
<div class="pl" style="top:207.9px">プロファイル</div>
<div class="cb" style="top:209.1px"></div>
<div class="pl" style="top:227.9px">ポイント数</div>
<div class="cb" style="top:229.1px"></div>
<div class="pl" style="top:247.9px">寸法</div>
<div class="cb" style="top:249.1px"></div>
<div class="pl" style="top:267.9px">拘束</div>
<div class="cb" style="top:269.1px"></div>
<div class="pl" style="top:287.9px">投影されたジオメトリ</div>
<div class="cb" style="top:289.1px"></div>
<div class="a" style="left:0;top:305px;width:161.500px;height:1px;background:#465164"></div>
<div class="a" style="left:85.500px;top:309.500px;width:67px;height:15px;border:1px solid #97a0ad;font-size:7.050px;font-weight:bold;line-height:13px;text-align:center;color:#fff;white-space:nowrap">スケッチを終了</div>
<svg width="161" height="328" style="left:0;top:0" viewBox="0 0 161 328"><path d="M91.8 153.4l2 2.100 3.300-4" stroke="#28303c" stroke-width="1.500" fill="none"/><path d="M91.8 213.4l2 2.100 3.300-4" stroke="#28303c" stroke-width="1.500" fill="none"/><path d="M91.8 233.4l2 2.100 3.300-4" stroke="#28303c" stroke-width="1.500" fill="none"/><path d="M91.8 253.4l2 2.100 3.300-4" stroke="#28303c" stroke-width="1.500" fill="none"/><path d="M91.8 273.4l2 2.100 3.300-4" stroke="#28303c" stroke-width="1.500" fill="none"/><path d="M91.8 293.4l2 2.100 3.300-4" stroke="#28303c" stroke-width="1.500" fill="none"/><circle cx="94.3" cy="46.5" r="4.6" fill="none" stroke="#b4bac2" stroke-width="1.100"/><rect x="93.4" y="41.0" width="1.8" height="1.8" fill="#3db8f5"/><rect x="93.4" y="50.2" width="1.8" height="1.8" fill="#3db8f5"/><circle cx="112.8" cy="46.5" r="4.6" fill="none" stroke="#b4bac2" stroke-width="1.100"/><rect x="111.9" y="41.0" width="1.8" height="1.8" fill="#3db8f5"/><rect x="116.5" y="45.6" width="1.8" height="1.8" fill="#3db8f5"/><rect x="111.9" y="50.2" width="1.8" height="1.8" fill="#3db8f5"/><circle cx="131.2" cy="46.5" r="4" fill="none" stroke="#b4bac2" stroke-width="1.100"/><path d="M125.7 44.5L132.7 40.5M134.2 41.5L136.7 47.5M127.2 51.7h8" stroke="#3db8f5" stroke-width="1.100"/><rect x="87.400" y="57.700" width="14.400" height="17.800" fill="#2b5a72" stroke="#2f7fa2" stroke-width="1"/><circle cx="94.3" cy="66.3" r="4.8" fill="none" stroke="#b4bac2" stroke-width="1.100"/><path d="M91.5 69.1L97.1 63.5" stroke="#3db8f5" stroke-width="1.100"/><rect x="90.7" y="68.3" width="1.6" height="1.6" fill="#3db8f5"/><rect x="96.3" y="62.7" width="1.6" height="1.6" fill="#3db8f5"/><circle cx="113.3" cy="66.3" r="4.4" fill="none" stroke="#b4bac2" stroke-width="1.100"/><path d="M107.8 63.3v6M109.3 71.6h8M113.3 66.3l3-3" stroke="#3db8f5" stroke-width="1.100"/><path d="M97.8 107.8L90.8 112.8L97.8 117.8" fill="none" stroke="#e0e3e7" stroke-width="1"/><path d="M89.3 112.8h10" stroke="#e8545c" stroke-width="1" stroke-dasharray="2.500 1 1 1"/><path d="M96.3 110.8v4" stroke="#e8545c" stroke-width="1"/><path d="M111.8 108.3h4.500v9h-4.500a4.500 4.500 0 0 1 0-9z" fill="#5f697a"/><path d="M107.8 112.8h10" stroke="#8a5a66" stroke-width="1" stroke-dasharray="2 1"/><rect x="89.5" y="129.8" width="9.600" height="7.800" rx="1" fill="#f2f3f5"/><path d="M91.3 129.8l1-2h2.400l.6 2" fill="#f2f3f5"/><rect x="91.3" y="132.2" width="6" height="3.200" fill="#3db8f5"/></svg></div>
<div id="cbar" class="a"><span class="a" style="left:16.500px;top:0">コメント</span></div>
<div id="nav" class="a"></div><div id="tline" class="a"></div><svg width="1024" height="54" style="left:0;top:644px" viewBox="0 644 1024 54"><path d="M178.500 656.300h5.500M181.250 653.500v5.600" stroke="#b4bac2" stroke-width="1.300"/><path d="M442.500 652.7a5.200 2.500 0 1 1 -3-.7" fill="none" stroke="#c9ced5" stroke-width="1.100"/><path d="M439.300 649.5v11" stroke="#3db8f5" stroke-width="1.100"/><path d="M448.7 654.2h3.600l-1.800 2.400z" fill="#8f98a5"/><rect x="457" y="652" width="9.600" height="7.400" rx="1" fill="#f2f3f5"/><path d="M459 652l1-2h2.400l.6 2" fill="#f2f3f5"/><rect x="458.800" y="654.2" width="6" height="3" fill="#3db8f5"/><path d="M476.500 660.8c-1.200-1.200-2.800-3.600-3.500-5.400l.9-.5 1.800 2.200-1-5.600 1-.3 1.400 4.600-.1-5.800 1.100-.1.600 5.700.9-5.300 1.100.2-.4 5.600 1.600-3.800 1 .4-1.300 5.200c-.3 1.300-.8 2.200-1.600 2.900z" fill="#e6e8ec"/><circle cx="493.500" cy="654.5" r="3" fill="none" stroke="#c9ced5" stroke-width="1.100"/><path d="M495.700 656.7l3 3" stroke="#e9b45a" stroke-width="1.400"/><path d="M497.300 651h3.400M499 649.3v3.400" stroke="#c9ced5" stroke-width=".9"/><rect x="506.300" y="649.7" width="11" height="10.600" fill="none" stroke="#c9ced5" stroke-width=".8" stroke-dasharray="1.500 1"/><circle cx="511.500" cy="654.2" r="4.300" fill="#596373" stroke="#c9ced5" stroke-width="1.100"/><path d="M514.300 657.5l2.600 2.600" stroke="#e9b45a" stroke-width="1.300"/><path d="M520.7 654.2h3.600l-1.800 2.400z" fill="#8f98a5"/><rect x="528.500" y="650.5" width="10" height="7.500" rx=".8" fill="#8f96a0" stroke="#d9dce0" stroke-width=".9"/><path d="M531 659.6h5" stroke="#d9dce0" stroke-width="1.200"/><path d="M541.2 654.2h3.600l-1.800 2.400z" fill="#8f98a5"/><path d="M548.500 650h9v9.500h-9zM551.500 650v9.500M554.500 650v9.500M548.500 653.2h9M548.500 656.4h9" fill="none" stroke="#e6e8ec" stroke-width=".9"/><path d="M561.2 654.2h3.600l-1.800 2.400z" fill="#8f98a5"/><rect x="568.800" y="650.5" width="4.600" height="4" fill="#d0d3d8"/><rect x="574.200" y="650.5" width="4.600" height="4" fill="#d0d3d8"/><rect x="568.800" y="655.3" width="4.600" height="4" fill="#d0d3d8"/><rect x="574.200" y="655.3" width="4.600" height="4" fill="#d0d3d8"/><path d="M581.2 654.2h3.600l-1.800 2.400z" fill="#8f98a5"/><path d="M4 681v8" stroke="#a7adb6" stroke-width="1.500"/><path d="M10.500 681v8l-5.500-4z" fill="#a7adb6"/><path d="M25.500 681v8l-5.500-4z" fill="#a7adb6"/><path d="M27 683v4" stroke="#a7adb6" stroke-width="1.200"/><path d="M36 680.5v9l7-4.500z" fill="#a7adb6"/><path d="M53 681v8l5.500-4z" fill="#a7adb6"/><path d="M51.500 683v4" stroke="#a7adb6" stroke-width="1.200"/><path d="M68 681v8l5.500-4z" fill="#a7adb6"/><path d="M74.500 681v8" stroke="#a7adb6" stroke-width="1.500"/><rect x="90.4" y="679.0" width="8.8" height="8.8" fill="none" stroke="#a2a8b1" stroke-width="1.100"/><rect x="89.5" y="678.1" width="1.800" height="1.800" fill="#3db8f5"/><rect x="98.3" y="678.1" width="1.800" height="1.800" fill="#3db8f5"/><rect x="89.5" y="686.9" width="1.800" height="1.800" fill="#3db8f5"/><path d="M95.8 688.3l3.600-3.600 1.200 1.200-3.600 3.600z" fill="#f5c948"/><path d="M99.4 684.7l.9-.9 1.200 1.200-.9.9z" fill="#e8545c"/><path d="M95.8 688.3l1.200 1.200-1.800 .6z" fill="#f2e6c8"/><path d="M105.6 680.6l1.500-2h7l-1.500 2z" fill="#b8e6ff"/><rect x="105.6" y="680.6" width="7" height="7.500" fill="#5fc2f8"/><path d="M112.6 680.6l1.500-2v7.500l-1.500 2z" fill="#2f9fe0"/><path d="M115.4 679.6v8" stroke="#c9ced5" stroke-width="1"/><path d="M105.6 688.9h8" stroke="#e6e8ec" stroke-width="1.200"/><rect x="121.4" y="679.0" width="8.8" height="8.8" fill="none" stroke="#a2a8b1" stroke-width="1.100"/><rect x="120.5" y="678.1" width="1.800" height="1.800" fill="#3db8f5"/><rect x="129.3" y="678.1" width="1.800" height="1.800" fill="#3db8f5"/><rect x="120.5" y="686.9" width="1.800" height="1.800" fill="#3db8f5"/><path d="M126.8 688.3l3.600-3.600 1.200 1.200-3.600 3.600z" fill="#f5c948"/><path d="M130.4 684.7l.9-.9 1.200 1.200-.9.9z" fill="#e8545c"/><path d="M126.8 688.3l1.200 1.200-1.800 .6z" fill="#f2e6c8"/><path d="M136.6 680.6l1.500-2h7l-1.500 2z" fill="#b8e6ff"/><rect x="136.6" y="680.6" width="7" height="7.500" fill="#5fc2f8"/><path d="M143.6 680.6l1.500-2v7.500l-1.500 2z" fill="#2f9fe0"/><path d="M146.4 679.6v8" stroke="#c9ced5" stroke-width="1"/><path d="M136.6 688.9h8" stroke="#e6e8ec" stroke-width="1.200"/><rect x="155.7" y="678.6" width="7" height="6.500" rx="1" fill="#5fc2f8"/><rect x="151.7" y="682.1" width="7" height="6.500" rx="1" fill="#5fc2f8"/><path d="M167.2 688.6v-5l5-5h3l3 3v7z" fill="#cfd2d6"/><path d="M168.7 682.6l4-4 2.500 2.500-4 4z" fill="#5fc2f8"/><path d="M167.2 683.6l5-5h3" stroke="#f4f4f4" stroke-width="1" fill="none"/><path d="M182.7 688.6v-7.500h5.500a5 5 0 0 1 5 5v2.500z" fill="#cfd2d6"/><path d="M186.2 679.1a7 7 0 0 1 7.500 6.500" stroke="#5fc2f8" stroke-width="2" fill="none"/><g transform="translate(203.7 683.6) scale(.86)"><path d="M0 -5.500l2 2.500h-1.300v2.300h2.300v-1.300l2.500 2-2.500 2v-1.300h-2.300v2.300h1.300l-2 2.500-2-2.500h1.300v-2.300h-2.300v1.300l-2.500-2 2.500-2v1.300h2.300v-2.300h-1.300z" fill="#f4f4f4"/></g><rect x="214.5" y="679.0" width="8.8" height="8.8" fill="none" stroke="#a2a8b1" stroke-width="1.100"/><rect x="213.6" y="678.1" width="1.800" height="1.800" fill="#3db8f5"/><rect x="222.4" y="678.1" width="1.800" height="1.800" fill="#3db8f5"/><rect x="213.6" y="686.9" width="1.800" height="1.800" fill="#3db8f5"/><path d="M219.9 688.3l3.600-3.600 1.200 1.200-3.600 3.600z" fill="#f5c948"/><path d="M223.5 684.7l.9-.9 1.200 1.200-.9.9z" fill="#e8545c"/><path d="M219.9 688.3l1.200 1.200-1.800 .6z" fill="#f2e6c8"/><path d="M229.7 680.6l1.500-2h7l-1.500 2z" fill="#b8e6ff"/><rect x="229.7" y="680.6" width="7" height="7.500" fill="#5fc2f8"/><path d="M236.7 680.6l1.500-2v7.500l-1.500 2z" fill="#2f9fe0"/><path d="M239.5 679.6v8" stroke="#c9ced5" stroke-width="1"/><path d="M229.7 688.9h8" stroke="#e6e8ec" stroke-width="1.200"/><path d="M244.8 688.6v-7.500h5.500a5 5 0 0 1 5 5v2.500z" fill="#cfd2d6"/><path d="M248.2 679.1a7 7 0 0 1 7.500 6.500" stroke="#5fc2f8" stroke-width="2" fill="none"/><rect x="261.1" y="679.0" width="8.8" height="8.8" fill="none" stroke="#a2a8b1" stroke-width="1.100"/><rect x="260.2" y="678.1" width="1.800" height="1.800" fill="#3db8f5"/><rect x="269.0" y="678.1" width="1.800" height="1.800" fill="#3db8f5"/><rect x="260.2" y="686.9" width="1.800" height="1.800" fill="#3db8f5"/><path d="M266.5 688.3l3.600-3.600 1.200 1.200-3.600 3.600z" fill="#f5c948"/><path d="M270.1 684.7l.9-.9 1.200 1.200-.9.9z" fill="#e8545c"/><path d="M266.5 688.3l1.200 1.200-1.800 .6z" fill="#f2e6c8"/><path d="M276.3 680.6l1.500-2h7l-1.500 2z" fill="#b8e6ff"/><rect x="276.3" y="680.6" width="7" height="7.500" fill="#5fc2f8"/><path d="M283.3 680.6l1.500-2v7.500l-1.500 2z" fill="#2f9fe0"/><path d="M286.1 679.6v8" stroke="#c9ced5" stroke-width="1"/><path d="M276.3 688.9h8" stroke="#e6e8ec" stroke-width="1.200"/><rect x="292.1" y="679.0" width="8.8" height="8.8" fill="none" stroke="#a2a8b1" stroke-width="1.100"/><rect x="291.2" y="678.1" width="1.800" height="1.800" fill="#3db8f5"/><rect x="300.0" y="678.1" width="1.800" height="1.800" fill="#3db8f5"/><rect x="291.2" y="686.9" width="1.800" height="1.800" fill="#3db8f5"/><path d="M297.5 688.3l3.600-3.600 1.200 1.200-3.600 3.600z" fill="#f5c948"/><path d="M301.1 684.7l.9-.9 1.200 1.200-.9.9z" fill="#e8545c"/><path d="M297.5 688.3l1.200 1.200-1.800 .6z" fill="#f2e6c8"/><path d="M307.3 680.6l1.500-2h7l-1.500 2z" fill="#b8e6ff"/><rect x="307.3" y="680.6" width="7" height="7.500" fill="#5fc2f8"/><path d="M314.3 680.6l1.500-2v7.500l-1.500 2z" fill="#2f9fe0"/><path d="M317.1 679.6v8" stroke="#c9ced5" stroke-width="1"/><path d="M307.3 688.9h8" stroke="#e6e8ec" stroke-width="1.200"/><rect x="323.3" y="679.1" width="4" height="4.500" rx="1" fill="#d7dade"/><rect x="328.3" y="684.1" width="4" height="4.500" rx="1" fill="#d7dade"/><path d="M324.8 684.6v2h2" stroke="#3db8f5" stroke-width=".8" fill="none"/><g transform="translate(343.3 683.6) scale(.86)"><path d="M0 -5.500l2 2.500h-1.300v2.300h2.300v-1.300l2.500 2-2.500 2v-1.300h-2.300v2.300h1.300l-2 2.500-2-2.500h1.300v-2.300h-2.300v1.300l-2.500-2 2.500-2v1.300h2.300v-2.300h-1.300z" fill="#f4f4f4"/></g><rect x="357.4" y="678.6" width="7" height="6.500" rx="1" fill="#5fc2f8"/><rect x="353.4" y="682.1" width="7" height="6.500" rx="1" fill="#5fc2f8"/><rect x="369.7" y="679.0" width="8.8" height="8.8" fill="none" stroke="#a2a8b1" stroke-width="1.100"/><rect x="368.8" y="678.1" width="1.800" height="1.800" fill="#3db8f5"/><rect x="377.6" y="678.1" width="1.800" height="1.800" fill="#3db8f5"/><rect x="368.8" y="686.9" width="1.800" height="1.800" fill="#3db8f5"/><path d="M375.1 688.3l3.600-3.600 1.200 1.200-3.600 3.600z" fill="#f5c948"/><path d="M378.7 684.7l.9-.9 1.200 1.200-.9.9z" fill="#e8545c"/><path d="M375.1 688.3l1.200 1.200-1.800 .6z" fill="#f2e6c8"/><path d="M384.4 687.6v-4c2-2.500 9-2.500 11 0v4c-2-1.500-9-1.500-11 0z" fill="#5fc2f8"/><path d="M385.4 680.6c2-2.300 7-2.300 9 0" stroke="#dfe2e6" stroke-width="1.200" fill="none"/><path d="M395.5 683.6v4" stroke="#dfe2e6" stroke-width="1"/><rect x="400.7" y="679.0" width="8.8" height="8.8" fill="none" stroke="#a2a8b1" stroke-width="1.100"/><rect x="399.8" y="678.1" width="1.800" height="1.800" fill="#3db8f5"/><rect x="408.6" y="678.1" width="1.800" height="1.800" fill="#3db8f5"/><rect x="399.8" y="686.9" width="1.800" height="1.800" fill="#3db8f5"/><path d="M406.1 688.3l3.600-3.600 1.200 1.200-3.600 3.600z" fill="#f5c948"/><path d="M409.7 684.7l.9-.9 1.200 1.200-.9.9z" fill="#e8545c"/><path d="M406.1 688.3l1.200 1.200-1.800 .6z" fill="#f2e6c8"/><path d="M415.4 682.6l3-4h6l2 2v4h-11z" fill="#5fc2f8"/><rect x="418.4" y="684.1" width="6" height="5" fill="#e1e3e6"/><path d="M421.4 684.1v5M418.4 686.6h6" stroke="#6d7684" stroke-width=".7"/><path d="M431.8 688.4l4.600-8.600v8.600z" fill="#e4e6e9"/><path d="M436.4 679.8l4.600 8.600h-4.600z" fill="#5fc2f8"/><path d="M446.9 683.6h5" stroke="#d5d8dc" stroke-width="1.600"/><circle cx="454.2" cy="683.6" r="2.800" fill="#6cb3e6"/><circle cx="447.4" cy="683.6" r="1.200" fill="#d5d8dc"/><rect x="466.0" y="678.6" width="7" height="6.500" rx="1" fill="#5fc2f8"/><rect x="462.0" y="682.1" width="7" height="6.500" rx="1" fill="#5fc2f8"/><g transform="translate(483.0 683.6) scale(.86)"><path d="M0 -5.500l2 2.500h-1.300v2.300h2.300v-1.300l2.500 2-2.500 2v-1.300h-2.300v2.300h1.300l-2 2.500-2-2.500h1.300v-2.300h-2.300v1.300l-2.500-2 2.500-2v1.300h2.300v-2.300h-1.300z" fill="#f4f4f4"/></g><rect x="493.8" y="679.0" width="8.8" height="8.8" fill="none" stroke="#a2a8b1" stroke-width="1.100"/><rect x="492.9" y="678.1" width="1.800" height="1.800" fill="#3db8f5"/><rect x="501.7" y="678.1" width="1.800" height="1.800" fill="#3db8f5"/><rect x="492.9" y="686.9" width="1.800" height="1.800" fill="#3db8f5"/><path d="M499.2 688.3l3.600-3.600 1.200 1.200-3.600 3.600z" fill="#f5c948"/><path d="M502.8 684.7l.9-.9 1.200 1.200-.9.9z" fill="#e8545c"/><path d="M499.2 688.3l1.200 1.200-1.800 .6z" fill="#f2e6c8"/><path d="M508.5 687.6v-4c2-2.500 9-2.500 11 0v4c-2-1.500-9-1.500-11 0z" fill="#5fc2f8"/><path d="M509.5 680.6c2-2.300 7-2.300 9 0" stroke="#dfe2e6" stroke-width="1.200" fill="none"/><path d="M519.6 683.6v4" stroke="#dfe2e6" stroke-width="1"/><rect x="524.8" y="679.0" width="8.8" height="8.8" fill="none" stroke="#a2a8b1" stroke-width="1.100"/><rect x="523.9" y="678.1" width="1.800" height="1.800" fill="#3db8f5"/><rect x="532.7" y="678.1" width="1.800" height="1.800" fill="#3db8f5"/><rect x="523.9" y="686.9" width="1.800" height="1.800" fill="#3db8f5"/><path d="M530.2 688.3l3.600-3.600 1.200 1.200-3.600 3.600z" fill="#f5c948"/><path d="M533.8 684.7l.9-.9 1.200 1.200-.9.9z" fill="#e8545c"/><path d="M530.2 688.3l1.200 1.200-1.800 .6z" fill="#f2e6c8"/><rect x="540.3" y="679.0" width="8.8" height="8.8" fill="none" stroke="#a2a8b1" stroke-width="1.100"/><rect x="539.4" y="678.1" width="1.800" height="1.800" fill="#3db8f5"/><rect x="548.2" y="678.1" width="1.800" height="1.800" fill="#3db8f5"/><rect x="539.4" y="686.9" width="1.800" height="1.800" fill="#3db8f5"/><path d="M545.7 688.3l3.600-3.600 1.200 1.200-3.600 3.600z" fill="#f5c948"/><path d="M549.3 684.7l.9-.9 1.200 1.200-.9.9z" fill="#e8545c"/><path d="M545.7 688.3l1.200 1.200-1.800 .6z" fill="#f2e6c8"/><path d="M555.6 687.6v-7l3-2.500v7z" fill="#e4e6e9"/><path d="M558.6 688.6v-8l3.500-2v8z" fill="#3cc46a"/><path d="M562.6 688.6v-8l3.500-2v8z" fill="#f4a968"/><rect x="571.4" y="679.0" width="8.8" height="8.8" fill="none" stroke="#a2a8b1" stroke-width="1.100"/><rect x="570.5" y="678.1" width="1.800" height="1.800" fill="#3db8f5"/><rect x="579.3" y="678.1" width="1.800" height="1.800" fill="#3db8f5"/><rect x="570.5" y="686.9" width="1.800" height="1.800" fill="#3db8f5"/><path d="M576.8 688.3l3.600-3.600 1.200 1.200-3.600 3.600z" fill="#f5c948"/><path d="M580.4 684.7l.9-.9 1.200 1.200-.9.9z" fill="#e8545c"/><path d="M576.8 688.3l1.200 1.200-1.800 .6z" fill="#f2e6c8"/><path d="M95.1 690.900v4.300M110.6 690.900v4.300M126.1 690.900v4.300M141.6 690.900v4.300M157.2 690.900v4.300M172.7 690.900v4.300M188.2 690.900v4.300M203.7 690.900v4.300M219.2 690.900v4.300M234.7 690.900v4.300M250.2 690.900v4.300M265.8 690.900v4.300M281.3 690.900v4.300M296.8 690.900v4.300M312.3 690.900v4.300M327.8 690.900v4.300M343.3 690.900v4.300M358.9 690.900v4.300M374.4 690.900v4.300M389.9 690.900v4.300M405.4 690.900v4.300M420.9 690.900v4.300M436.4 690.900v4.300M451.9 690.900v4.300M467.5 690.900v4.300M483.0 690.900v4.300M498.5 690.900v4.300M514.0 690.900v4.300M529.5 690.900v4.300M545.0 690.900v4.300M560.6 690.900v4.300M576.1 690.900v4.300M95.100 695.200H576" stroke="#5b677b" stroke-width="1" fill="none"/><path d="M580.500 675h7l-.5 2.500-2.300 3v15h-1.400v-15l-2.300-3z" fill="#d5d8dc"/><circle cx="1010.500" cy="684.800" r="3" fill="none" stroke="#aeb4bd" stroke-width="2.200"/><rect x="1009.500" y="679.200" width="2" height="2.400" fill="#aeb4bd" transform="rotate(0 1010.500 684.800)"/><rect x="1009.500" y="679.200" width="2" height="2.400" fill="#aeb4bd" transform="rotate(45 1010.500 684.800)"/><rect x="1009.500" y="679.200" width="2" height="2.400" fill="#aeb4bd" transform="rotate(90 1010.500 684.800)"/><rect x="1009.500" y="679.200" width="2" height="2.400" fill="#aeb4bd" transform="rotate(135 1010.500 684.800)"/><rect x="1009.500" y="679.200" width="2" height="2.400" fill="#aeb4bd" transform="rotate(180 1010.500 684.800)"/><rect x="1009.500" y="679.200" width="2" height="2.400" fill="#aeb4bd" transform="rotate(225 1010.500 684.800)"/><rect x="1009.500" y="679.200" width="2" height="2.400" fill="#aeb4bd" transform="rotate(270 1010.500 684.800)"/><rect x="1009.500" y="679.200" width="2" height="2.400" fill="#aeb4bd" transform="rotate(315 1010.500 684.800)"/></svg>
</body></html>
